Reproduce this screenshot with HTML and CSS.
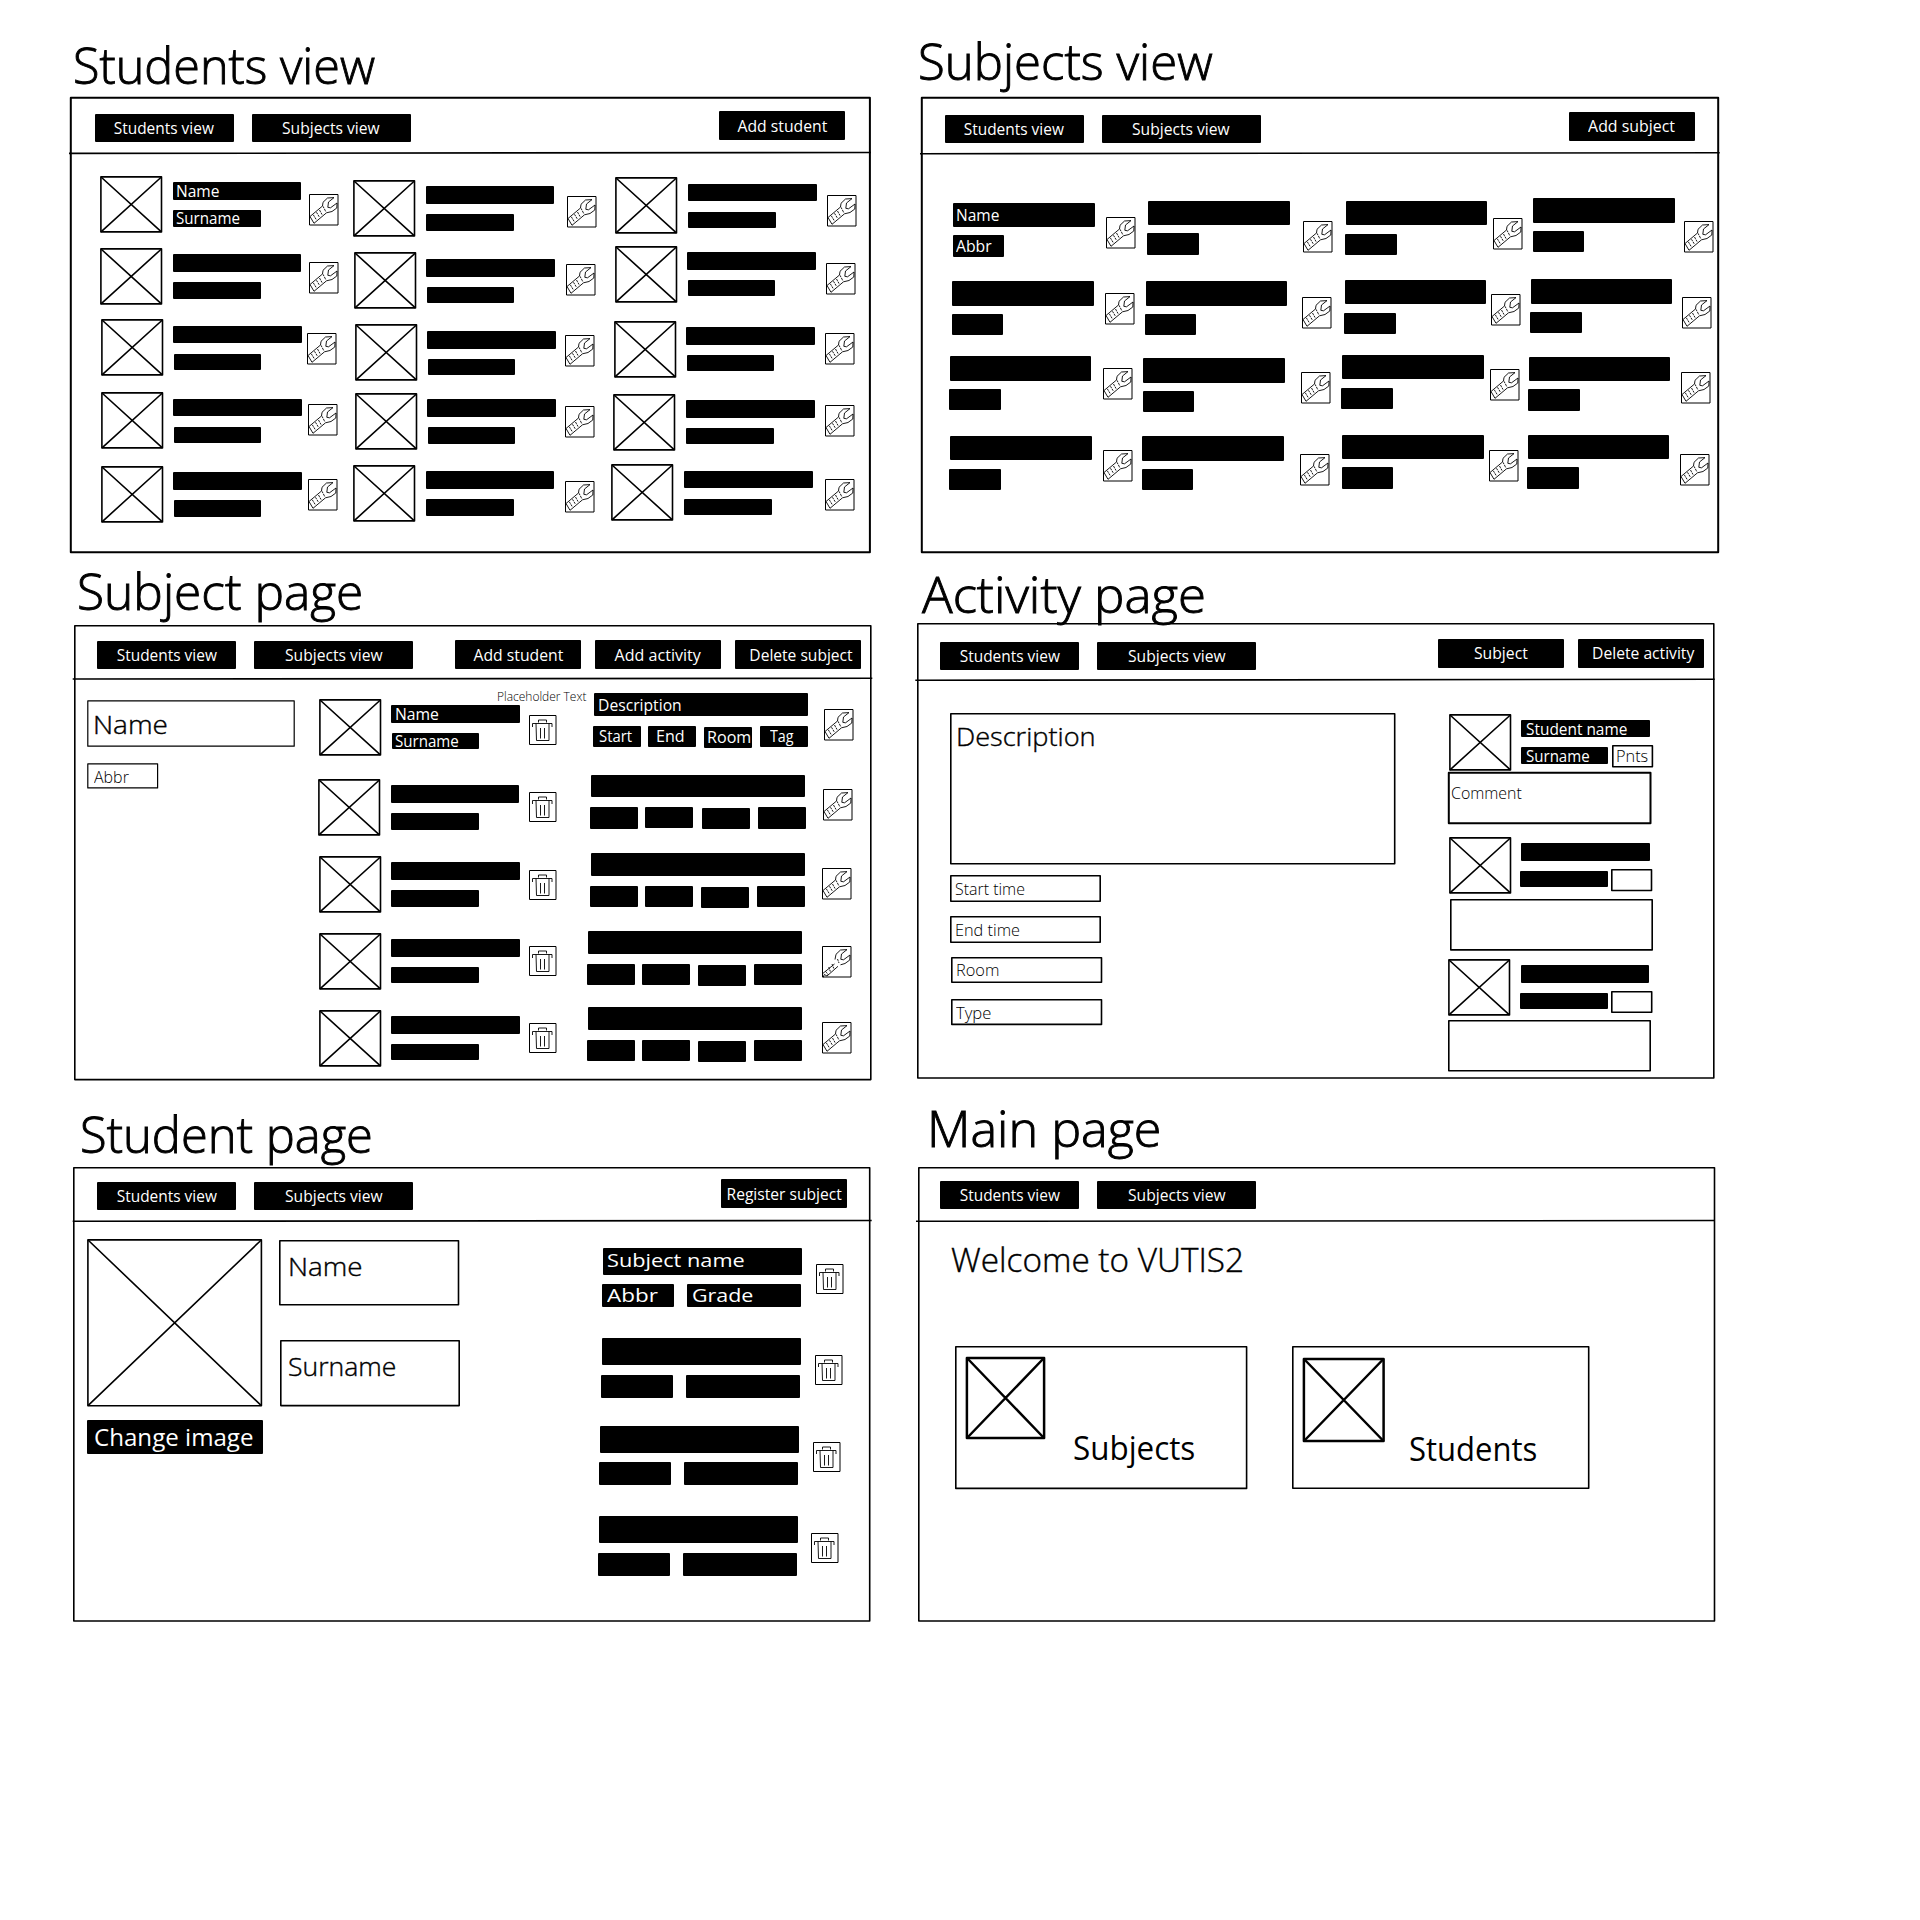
FILE: index.html
```html
<!DOCTYPE html>
<html lang="en">
<head>
<meta charset="utf-8">
<title>VUTIS2 wireframes</title>
<link rel="stylesheet" href="styles.css">
</head>
<body>
<svg class="symbols" aria-hidden="true">
  <symbol id="wrench" viewBox="0 0 29.5 31.5">
    <path d="M1 22.5 13.5 12 14 8.3 18.5 4 25 3.6 19.5 8 18.8 13.3 21.5 13.8 28 9 27.8 14 23 17.5 17.5 18.8 5 29.3Z"/>
    <path stroke-dasharray="2.2 .8" d="M4.3 20.8 7.5 26M7.5 18.3 10.5 23.3M10.5 16 13.3 21M14 12.3 17 18"/>
  </symbol>
  <symbol id="wrench-bent" viewBox="0 0 29.5 31.5">
    <path d="M1 27.3 12.5 18M1 31.8 2.3 28.5 5 30 16 20.3M18.5 18.8 23 17.5 27.8 14 28 9 21.5 13.8 18.8 13.3 19.5 8 25 3.6 18.5 4 14 8.3 13 13.5"/>
    <path stroke-dasharray="2 .8" d="M3.5 25.3 6.5 29M6.8 21 8.5 26M10 18 12 23M15.5 13 17 17"/>
  </symbol>
  <symbol id="trash" viewBox="0 0 27.5 30">
    <path d="M9.5 7.5V5h8v2.5M3.5 12V8.5H23V12M7 8.5l.5 17H20V8.5M11.5 13v10.5M15.5 13v10.5"/>
  </symbol>
</svg>
<main class="board" id="board"></main>
<script src="board.js"></script>
</body>
</html>
```
FILE: styles.css
```css
body {
  margin: 0;
  background: #fff;
  color: #000;
  font-family: "Open Sans", "Noto Sans", sans-serif;
}

.symbols { display: none; }

.board {
  position: relative;
  width: 1920px;
  height: 1920px;
  overflow: hidden;
}

/* Each wireframe is a window on the free canvas. */
.sheet { position: absolute; }

.bar {
  display: flex;
  align-items: flex-start;
  box-sizing: border-box;
}
.nav, .actions { display: flex; }
.nav { gap: 18px; }
.actions { margin-left: auto; gap: 14px; }

.button {
  display: flex;
  align-items: center;
  justify-content: center;
  box-sizing: border-box;
  height: 28px;
  background: #000;
  color: #fff;
  border-radius: 1px;
}
.button.students { width: 139px; }
.button.subjects { width: 159px; }
.button.action { width: 126px; height: 29px; }
.button.late { padding-left: 5px; }

.label {
  position: absolute;
  margin: 0;
  white-space: pre;
  line-height: normal;
  font-weight: 400;
  transform-origin: 0 0;
}
.button .label { position: static; transform-origin: 50% 50%; }
.white { color: #fff; }
.light { font-weight: 300; }
.field { -webkit-text-stroke: .4px #000; }
.heading { -webkit-text-stroke: .9px #000; }

.item { position: absolute; box-sizing: border-box; }
.solid { background: #000; border-radius: 1px; }

.rule, .outline, .thumb, .icon {
  overflow: visible;
  fill: none;
  stroke: #000;
  stroke-width: 1.6;
  stroke-linejoin: round;
}
.rule { position: absolute; left: 0; top: 0; width: 100%; height: 100%; }
.outline.thin { stroke-width: 1.2; }
.outline.bold { stroke-width: 2; }
.thumb.bold { stroke-width: 2.5; }
.icon { stroke-width: .9; }
.icon .edge { stroke-width: 1; }
```
FILE: board.js
```js
const SVG = 'http://www.w3.org/2000/svg';
const board = document.getElementById('board');
const pen = document.createElement('canvas').getContext('2d');

function svg(tag, attrs, parent) {
  const el = document.createElementNS(SVG, tag);
  for (const k in attrs) el.setAttribute(k, attrs[k]);
  if (parent) parent.appendChild(el);
  return el;
}
function div(cls, parent) {
  const el = document.createElement('div');
  el.className = cls;
  parent.appendChild(el);
  return el;
}
function place(el, x, y, w, h) {
  el.style.left = x + 'px';
  el.style.top = y + 'px';
  if (w !== undefined) { el.style.width = w + 'px'; el.style.height = h + 'px'; }
}

// Labels are stretched so that the glyphs span exactly the wanted width.
function label(text, width, size, cls, parent, tag = 'span') {
  const el = document.createElement(tag);
  el.className = 'label ' + cls;
  el.textContent = text;
  el.style.fontSize = size + 'px';
  parent.appendChild(el);
  pen.font = `${cls.includes('light') ? 300 : 400} ${size}px "Open Sans"`;
  const m = pen.measureText(text);
  const scale = width / (m.actualBoundingBoxRight + m.actualBoundingBoxLeft);
  el.style.transform = `scaleX(${scale})`;
  return { el, left: m.actualBoundingBoxLeft * scale, ascent: Math.round(m.fontBoundingBoxAscent) };
}
function text(str, x1, x2, base, size, cls = '', tag) {
  const t = label(str, x2 - x1, size, cls, board, tag);
  place(t.el, x1 + t.left, base - t.ascent);
}
function solid(x, y, w, h) { place(div('item solid', board), x, y, w, h); }
function box(x1, y1, x2, y2, cls = '') {
  const s = svg('svg', { class: 'item outline ' + cls }, board);
  svg('rect', { x: .8, y: .8, width: x2 - x1 - 1.6, height: y2 - y1 - 1.6 }, s);
  place(s, x1, y1, x2 - x1, y2 - y1);
}

function thumb(x, y, w = 62.4, h = 56.8, cls = '') {
  const s = svg('svg', { class: 'item thumb ' + cls }, board);
  svg('rect', { x: .9, y: .9, width: w - 1.8, height: h - 1.8 }, s);
  svg('path', { d: `M1 1 ${w - 1} ${h - 1}M${w - 1} 1 1 ${h - 1}` }, s);
  place(s, x - .3, y, w, h);
}
function icon(name, x, y, w, h) {
  const s = svg('svg', { class: 'item icon' }, board);
  svg('rect', { class: 'edge', x: .5, y: .5, width: w - 1, height: h - 1 }, s);
  svg('use', { href: '#' + name, width: w, height: h }, s);
  place(s, x, y, w, h);
}
const wrench = ([x, y, name = 'wrench']) => icon(name, x, y, 29.5, 31.5);
const trash = ([x, y]) => icon('trash', x, y, 27.5, 30);

function student([x, y]) {
  thumb(x, y);
  solid(x + 72.3, y + 6.4, 128.7, 17.8);
  solid(x + 72.6, y + 34.2, 87.9, 16.5);
}
function subject([x, y]) {
  solid(x, y, 141.7, 24.6);
  solid(x - .7, y + 32.7, 51.5, 21.4);
}
function activity([x, y]) {
  solid(x, y, 214, 22.8);
  [[-.7, 32.9], [54, 32.5], [110.8, 33.6], [166.7, 32.9]].forEach(([dx, dy]) => solid(x + dx, y + dy, 48, 21.3));
}
function grade([x, y]) {
  solid(x, y, 199, 27.3);
  solid(x - 1, y + 36.7, 72.3, 23);
  solid(x + 84, y + 36.7, 114.3, 23);
}

function sheet(o) {
  const [x1, y1, x2, y2] = o.frame;
  text(o.title[0], o.title[1], o.title[2], o.title[3], 49, 'light heading', 'h1');
  box(x1, y1, x2, y2, o.bold ? 'bold' : '');
  const el = document.createElement('section');
  el.className = 'sheet';
  board.appendChild(el);
  place(el, x1, y1, x2 - x1, y2 - y1);
  const bar = div('bar', el);
  bar.style.padding = `${o.nav[1] - y1}px ${x2 - (o.right || x2)}px 0 ${o.nav[0] - x1}px`;
  const nav = div('nav', bar);
  label('Students view', 100.5, 16.3, '', div('button students', nav));
  label('Subjects view', 98, 16.3, '', div('button subjects', nav));
  if (o.actions) {
    const group = div('actions', bar);
    group.style.marginTop = o.lift + 'px';
    o.actions.forEach(([s, w, late]) => label(s, w, 16.3, '', div('button action' + (late ? ' late' : ''), group)));
  }
  const r = svg('svg', { class: 'rule' }, board);
  const [rx1, ry1, rx2, ry2] = o.rule;
  svg('line', { x1: rx1, y1: ry1, x2: rx2, y2: ry2 }, r);
}

/* Students view */
sheet({ title: ['Students view', 74.7, 374.3, 84.4], frame: [70.3, 97, 871, 553], bold: true, nav: [94.7, 114.4], right: 845,
  actions: [['Add student', 90]], lift: -3.2, rule: [69, 153.4, 871, 152.5] });
[[100.3, 176], [100.3, 248], [101, 319.3], [101, 392.3], [101, 466],
 [353.3, 180], [354, 252.4], [355, 324.4], [355, 393], [353.3, 465],
 [615.7, 177.3], [615, 245.7], [614, 320.7], [613.7, 393.7], [611.7, 464.3]].forEach(student);
[[309, 194.3], [308.7, 262], [307.3, 333], [307.7, 404], [307.7, 478.7],
 [566.7, 196], [566, 263.7], [564.7, 334.7], [564.7, 406], [565, 480.7],
 [826.7, 195], [826, 262.7], [824.7, 333.3], [824.7, 404.7], [825, 479.3]].forEach(wrench);
text('Name', 177.3, 219.7, 196.7, 16.3, 'white');
text('Surname', 176.4, 240.3, 223.7, 16.3, 'white');

/* Subjects view */
sheet({ title: ['Subjects view', 920.5, 1212.7, 80.4], frame: [921, 97, 1719, 553], bold: true, nav: [944.7, 114.6], right: 1695,
  actions: [['Add subject', 87]], lift: -3, rule: [920, 153.8, 1719.7, 152.7] });
[[953.3, 202.6], [952.3, 281.3], [949.8, 356], [950, 435.8],
 [1148, 200.6], [1145.5, 281.3], [1143.3, 358.4], [1142.3, 436.2],
 [1345.7, 200.8], [1344.7, 279.8], [1342, 354.8], [1342.3, 434.5],
 [1533.2, 198.2], [1530.7, 279.2], [1528.7, 356.5], [1527.8, 434.5]].forEach(subject);
[[1106, 217.3], [1105, 293], [1103.3, 368.3], [1102.7, 449.8],
 [1303.3, 221], [1302, 297], [1300.7, 372.3], [1300, 453.5],
 [1493, 218], [1491, 294], [1490, 369.3], [1489.3, 450],
 [1683.7, 221.3], [1682, 297], [1681, 372.3], [1680.3, 453.7]].forEach(wrench);
text('Name', 957, 999.3, 220.5, 16.3, 'white');
text('Abbr', 956, 992, 251.7, 16.3, 'white');

/* Subject page */
sheet({ title: ['Subject page', 78.7, 361, 610], frame: [73.7, 625.3, 871.3, 1080.7], nav: [97.5, 640.6], right: 861,
  actions: [['Add student', 90], ['Add activity', 87], ['Delete subject', 102.5, true]], lift: -.6, rule: [72.7, 679, 872.3, 678.3] });
box(87, 700.3, 295, 747.3, 'thin');
text('Name', 95.3, 166.5, 734, 26.3, 'light field');
box(87.3, 763.3, 158.7, 789, 'thin');
text('Abbr', 94, 129.5, 782.7, 16.3, 'light');
[[319, 698.6], [318.3, 779], [318.8, 856], [318.8, 932.5], [318.8, 1009.6]].forEach(student);
[[528.7, 715], [529.3, 792], [529, 870], [529, 946], [529, 1023]].forEach(trash);
[[593.5, 693], [590.8, 774.5], [590.5, 853], [587.5, 931.3], [587.5, 1007.3]].forEach(activity);
[[823.7, 709], [823, 789], [822, 868], [822.3, 946, 'wrench-bent'], [821.7, 1022.3]].forEach(wrench);
text('Name', 395.5, 438.3, 719.9, 16.3, 'white');
text('Surname', 395.3, 459, 746.8, 16.3, 'white');
text('Placeholder Text', 498.3, 586.7, 700.5, 12, 'light');
text('Description', 598.5, 680.3, 710.5, 16.3, 'white');
text('Start', 598.8, 632, 742, 16.3, 'white');
text('End', 657, 683.7, 742, 16.3, 'white');
text('Room', 707.5, 749.7, 743.3, 16.3, 'white');
text('Tag', 770.3, 794, 742, 16.3, 'white');

/* Activity page */
sheet({ title: ['Activity page', 922.3, 1204.3, 612.6], frame: [916.7, 622.5, 1714.3, 1078.3], nav: [940.3, 641.5], right: 1704,
  actions: [['Subject', 54], ['Delete activity', 102, true]], lift: -3, rule: [915.3, 680.3, 1714.7, 679.3] });
box(950, 713.2, 1395.5, 864.7);
text('Description', 958.3, 1094.3, 746.4, 26.3, 'light field');
box(950, 875, 1101, 902);
box(950, 916, 1101, 943);
box(950.7, 957, 1102, 983);
box(950.7, 999.3, 1102, 1025.5);
text('Start time', 955, 1024, 894.8, 16.3, 'light');
text('End time', 956, 1019, 935.7, 16.3, 'light');
text('Room', 957, 999, 975.9, 16.3, 'light');
text('Type', 956.3, 990.7, 1018.7, 16.3, 'light');
[[1449.3, 713.5], [1449, 837], [1448.7, 959]].forEach(([x, y]) => {
  thumb(x, y);
  solid(x + 72, y + 6, 128.7, 17.8);
  solid(x + 71.4, y + 33.7, 87.6, 16.5);
});
box(1611.8, 744.5, 1653, 767);
box(1611, 869, 1652.3, 891.3);
box(1611.2, 991, 1652.7, 1013);
box(1447.5, 772, 1650.8, 824, 'bold');
box(1450, 899, 1653, 950.7);
box(1448, 1020.4, 1651, 1072);
text('Student name', 1525.5, 1626.7, 734.9, 16.3, 'white');
text('Surname', 1525.5, 1589, 761.9, 16.3, 'white');
text('Pnts', 1616.7, 1647.3, 762, 16.3, 'light');
text('Comment', 1452.3, 1522.7, 798.7, 16.3, 'light');

/* Student page */
sheet({ title: ['Student page', 81.7, 370.7, 1152.6], frame: [72.8, 1167.2, 870.3, 1622], nav: [97.3, 1182.5], right: 847.3,
  actions: [['Register subject', 114.5]], lift: -3, rule: [72.7, 1221.3, 871.7, 1220.5] });
thumb(87.7, 1239, 175.3, 167.7);
solid(87, 1420, 176, 34);
text('Change image', 95, 253, 1445.5, 24, 'white');
box(278.7, 1240, 459, 1305.5);
text('Name', 289.7, 360.5, 1276, 26.3, 'light field');
box(280, 1340.3, 460, 1406.7);
text('Surname', 288.7, 394.5, 1375.5, 26.3, 'light field');
[[602.7, 1247.5], [601.8, 1337.9], [600, 1425.5], [598.7, 1516.2]].forEach(grade);
[[815.7, 1264], [815, 1354.7], [813, 1442], [811.3, 1532.7]].forEach(trash);
text('Subject name', 607.3, 745, 1267.2, 17.8, 'white');
text('Abbr', 606.5, 657, 1302, 17.8, 'white');
text('Grade', 692.8, 753, 1302, 17.8, 'white');

/* Main page */
sheet({ title: ['Main page', 931.6, 1160, 1146.7], frame: [917.7, 1167.2, 1715, 1622], nav: [940, 1181.4], rule: [916, 1221.3, 1715, 1220.5] });
text('Welcome to VUTIS2', 951, 1242.5, 1272, 32.3, 'light field');
box(954.6, 1345.5, 1247, 1488.7);
thumb(966.5, 1357, 79, 82, 'bold');
text('Subjects', 1073.5, 1193.5, 1460, 32.3);
box(1291.5, 1346, 1589, 1489);
thumb(1303.5, 1358, 81.5, 84, 'bold');
text('Students', 1410, 1536, 1460.5, 32.3);
```
